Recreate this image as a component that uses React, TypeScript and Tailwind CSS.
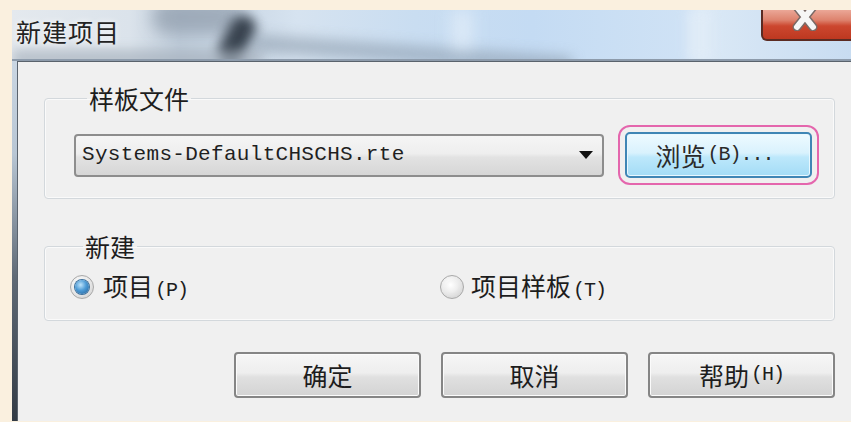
import React from "react";

const cjk = '"Noto Sans CJK SC", "Noto Sans", sans-serif';
const mono = '"Liberation Mono", "DejaVu Sans Mono", monospace';

function Mn({ children }: { children: React.ReactNode }) {
  return (
    <span className="ml-[2px] text-[20px] tracking-[-1px]" style={{ fontFamily: mono }}>
      {children}
    </span>
  );
}

function PushButton({ children }: { children: React.ReactNode }) {
  return (
    <button className="flex h-[46px] w-[187px] items-center justify-center rounded-[4px] border-2 border-[#858585] bg-[linear-gradient(#f6f6f6_0%,#eeeeee_45%,#e0e0e0_55%,#d3d3d3_100%)] text-[25px] leading-none text-[#1d1d1d] shadow-[inset_0_0_0_1px_#fbfbfb]">
      {children}
    </button>
  );
}

function Radio({ checked }: { checked: boolean }) {
  return (
    <span className="flex h-[24px] w-[24px] items-center justify-center rounded-full border border-[#a9a9a9] bg-[radial-gradient(circle_at_40%_35%,#ffffff_0%,#e9e9e9_50%,#c8c8c8_100%)]">
      {checked ? (
        <span className="h-[14px] w-[14px] rounded-full bg-[radial-gradient(circle_at_40%_35%,#bfe4fb_0%,#4d9bd6_45%,#1f5d95_100%)] shadow-[0_0_0_1px_#3a6f9c]" />
      ) : (
        <span className="h-[14px] w-[14px] rounded-full bg-[radial-gradient(circle_at_40%_35%,#ffffff_0%,#ededed_60%,#d6d6d6_100%)]" />
      )}
    </span>
  );
}

export default function App() {
  return (
    <div
      className="flex h-[422px] w-[851px] flex-col overflow-hidden bg-[#faf0df] pl-[12px] pt-[10px] pb-[1px]"
      style={{ fontFamily: cjk }}
    >
      <div className="flex flex-1 flex-col bg-[linear-gradient(#d4dfea_0%,#b8c6d4_35%,#5f6a76_65%,#333b45_100%)]">
        {/* title bar: blurred glass behind the caption */}
        <div className="relative flex h-[51px] items-start overflow-hidden bg-[linear-gradient(90deg,#e4e9ee_0%,#dbe3eb_14%,#c0cddb_20%,#d6e3f0_34%,#c9ddf1_48%,#c4dbf3_62%,#cfe2f5_80%,#dbe9f6_82%,#c8dcf1_100%)]">
          <div className="absolute left-[140px] top-[-10px] h-[34px] w-[90px] rounded-full bg-[#8f9cab] opacity-70 blur-[8px]" />
          <div className="absolute left-[212px] top-[4px] h-[52px] w-[26px] rotate-[28deg] rounded-full bg-[#2a3440] opacity-90 blur-[6px]" />
          <div className="absolute left-[0px] top-[40px] h-[16px] w-[250px] bg-[#a4afbb] opacity-70 blur-[6px]" />
          <div className="absolute left-[240px] top-[36px] h-[16px] w-[320px] rotate-[4deg] bg-[#8797a8] opacity-60 blur-[7px]" />
          <div className="absolute left-[440px] top-[0px] h-[40px] w-[20px] bg-[#eaf3fb] opacity-60 blur-[8px]" />
          <div className="absolute left-[675px] top-[0px] h-[51px] w-[24px] bg-[#e2edf8] opacity-70 blur-[6px]" />
          <div className="absolute bottom-0 left-0 right-0 h-[2px] bg-[#8d9bab]" />
          <span className="relative ml-[4px] mt-[6px] text-[25px] leading-[30px] tracking-[1px] text-[#232323] [text-shadow:0_0_6px_#ffffff]">
            新建项目
          </span>
          <div className="relative ml-auto mr-[-12px] flex h-[31px] w-[102px] items-start justify-center overflow-hidden rounded-bl-[6px] border-b-2 border-l-2 border-[#5b2b22] bg-[linear-gradient(#eba797_0%,#dd826d_35%,#cc472f_55%,#bd3820_100%)]">
            <svg width="30" height="26" viewBox="0 0 30 26" className="-ml-[16px] mt-[-5px]">
              <path d="M7 2 L23 22 M23 2 L7 22" stroke="#7a6a66" strokeWidth="9" strokeLinecap="round" />
              <path d="M7 2 L23 22 M23 2 L7 22" stroke="#f6f6f6" strokeWidth="6" strokeLinecap="round" />
            </svg>
          </div>
        </div>

        {/* client area */}
        <div className="flex flex-1 pl-[5px]">
          <div className="flex flex-1 flex-col border-l border-t border-[#5a636d] bg-[#f0f0f0] pl-[26px] pr-[16px] pt-[21px]">
            <fieldset className="rounded-[4px] border border-[#d3d8dc] pb-[20px] pl-[29px] pr-[15px] shadow-[inset_0_0_0_1px_#fafafa]">
              <legend className="ml-[13px] px-[2px] text-[25px] leading-[30px] text-[#1d1d1d]">样板文件</legend>
              <div className="mt-[19px] flex items-center">
                <div className="flex h-[43px] w-[530px] items-center rounded-[4px] border-2 border-[#8d8d8d] bg-[linear-gradient(#f5f5f5_0%,#eeeeee_45%,#e2e2e2_55%,#d6d6d6_100%)] pl-[6px] pr-[9px]">
                  <span className="flex-1 text-[21px] tracking-[0.3px] text-[#1f1f1f]" style={{ fontFamily: mono }}>
                    Systems-DefaultCHSCHS.rte
                  </span>
                  <svg width="14" height="8" viewBox="0 0 14 8">
                    <path d="M0 0 H14 L7 8 Z" fill="#111" />
                  </svg>
                </div>
                <button className="ml-[21px] flex h-[46px] w-[187px] items-center justify-center rounded-[5px] border-2 border-[#3f86b5] bg-[linear-gradient(#eefaff_0%,#d9f2fd_45%,#bde8fb_55%,#a3dcf6_100%)] pr-[8px] text-[25px] leading-none text-[#2a2a2a] shadow-[inset_0_0_0_1px_#e8f8ff] outline-2 outline-offset-[5px] outline-[#e466ad]">
                  浏览<Mn>(B)...</Mn>
                </button>
              </div>
            </fieldset>

            <fieldset className="mt-[32px] h-[90px] rounded-[4px] border border-[#d3d8dc] pl-[25px] shadow-[inset_0_0_0_1px_#fafafa]">
              <legend className="ml-[13px] px-[2px] text-[25px] leading-[30px] text-[#1d1d1d]">新建</legend>
              <div className="mt-[12px] flex items-center">
                <div className="flex w-[370px] items-center gap-[9px]">
                  <Radio checked />
                  <span className="text-[25px] leading-none text-[#1d1d1d]">
                    项目<Mn>(P)</Mn>
                  </span>
                </div>
                <div className="flex items-center gap-[7px]">
                  <Radio checked={false} />
                  <span className="text-[25px] leading-none text-[#1d1d1d]">
                    项目样板<Mn>(T)</Mn>
                  </span>
                </div>
              </div>
            </fieldset>

            <div className="mt-[31px] flex justify-end gap-[20px]">
              <PushButton>确定</PushButton>
              <PushButton>取消</PushButton>
              <PushButton>
                帮助<Mn>(H)</Mn>
              </PushButton>
            </div>
          </div>
        </div>
      </div>
    </div>
  );
}
